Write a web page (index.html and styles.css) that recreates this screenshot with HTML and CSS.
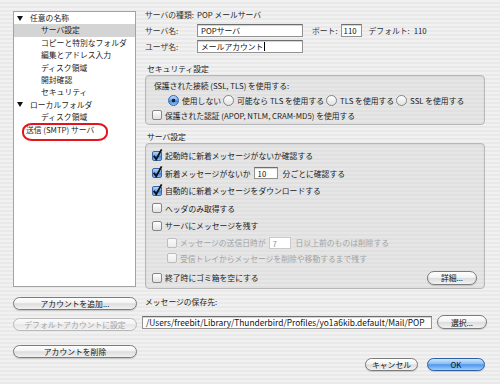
FILE: index.html
```html
<!DOCTYPE html>
<html lang="ja">
<head>
<meta charset="UTF-8">
<meta name="viewport" content="width=device-width, initial-scale=1.0">
<title>アカウント設定</title>
<link rel="stylesheet" href="styles.css">
</head>
<body>
<svg class="defs" width="0" height="0">
  <defs>
    <linearGradient id="aqua" x1="0" y1="0" x2="0" y2="1">
      <stop offset="0" stop-color="#c4def9"/>
      <stop offset="0.45" stop-color="#6ea8ee"/>
      <stop offset="0.55" stop-color="#3f86e4"/>
      <stop offset="1" stop-color="#8fc4f8"/>
    </linearGradient>
  </defs>
</svg>

<div class="window">
  <div class="sidebar">
    <ul class="tree">
      <li class="node parent"><span class="twisty"></span>任意の名称</li>
      <li class="node child selected">サーバ設定</li>
      <li class="node child">コピーと特別なフォルダ</li>
      <li class="node child">編集とアドレス入力</li>
      <li class="node child">ディスク領域</li>
      <li class="node child">開封確認</li>
      <li class="node child">セキュリティ</li>
      <li class="node parent"><span class="twisty"></span>ローカルフォルダ</li>
      <li class="node child">ディスク領域</li>
      <li class="node top">送信 (SMTP) サーバ</li>
      <li class="mark"></li>
    </ul>
    <button class="btn side-btn first">アカウントを追加...</button>
    <button class="btn side-btn second" disabled>デフォルトアカウントに設定</button>
    <button class="btn side-btn third">アカウントを削除</button>
  </div>

  <div class="content">
    <div class="info">
      <span class="lbl">サーバの種類:</span>
      <span class="val">POP メールサーバ</span>
      <span class="lbl">サーバ名:</span>
      <div class="line">
        <span class="field host">POPサーバ</span>
        <span class="lbl port-lbl">ポート:</span>
        <span class="field port">110</span>
        <span class="lbl def-lbl">デフォルト:</span>
        <span class="val def-val">110</span>
      </div>
      <span class="lbl">ユーザ名:</span>
      <div class="line">
        <span class="field host">メールアカウント<span class="caret"></span></span>
      </div>
    </div>

    <div class="section-title">セキュリティ設定</div>
    <div class="group security">
      <div class="row text-row">保護された接続 (SSL, TLS) を使用する:</div>
      <div class="row radios">
        <span class="radio on"></span><span class="opt">使用しない</span>
        <span class="radio"></span><span class="opt">可能なら TLS を使用する</span>
        <span class="radio"></span><span class="opt">TLS を使用する</span>
        <span class="radio"></span><span class="opt">SSL を使用する</span>
      </div>
      <div class="row check-row">
        <span class="cb"></span>保護された認証 (APOP, NTLM, CRAM-MD5) を使用する
      </div>
    </div>

    <div class="section-title server-title">サーバ設定</div>
    <div class="group server">
      <div class="row srow">
        <svg class="cb-on" viewBox="0 0 10 10" width="10" height="10"><rect x="0.5" y="0.5" width="9" height="9" rx="1.5" fill="url(#aqua)" stroke="#3a66a3"/><path d="M1.8 4.8 L4.2 8.2 L9.6 -1.6" fill="none" stroke="#111" stroke-width="1.8"/></svg>
        起動時に新着メッセージがないか確認する
      </div>
      <div class="row srow">
        <svg class="cb-on" viewBox="0 0 10 10" width="10" height="10"><rect x="0.5" y="0.5" width="9" height="9" rx="1.5" fill="url(#aqua)" stroke="#3a66a3"/><path d="M1.8 4.8 L4.2 8.2 L9.6 -1.6" fill="none" stroke="#111" stroke-width="1.8"/></svg>
        新着メッセージがないか<span class="field num">10</span><span class="after">分ごとに確認する</span>
      </div>
      <div class="row srow">
        <svg class="cb-on" viewBox="0 0 10 10" width="10" height="10"><rect x="0.5" y="0.5" width="9" height="9" rx="1.5" fill="url(#aqua)" stroke="#3a66a3"/><path d="M1.8 4.8 L4.2 8.2 L9.6 -1.6" fill="none" stroke="#111" stroke-width="1.8"/></svg>
        自動的に新着メッセージをダウンロードする
      </div>
      <div class="row srow"><span class="cb"></span>ヘッダのみ取得する</div>
      <div class="row srow"><span class="cb"></span>サーバにメッセージを残す</div>
      <div class="row srow sub disabled short">
        <span class="cb"></span>メッセージの送信日時が<span class="field num small">7</span><span class="after">日以上前のものは削除する</span>
      </div>
      <div class="row srow sub disabled short2">
        <span class="cb"></span>受信トレイからメッセージを削除や移動するまで残す
      </div>
      <div class="row srow last">
        <span class="grow"><span class="cb"></span>終了時にゴミ箱を空にする</span>
        <button class="btn detail">詳細...</button>
      </div>
    </div>

    <div class="store-lbl">メッセージの保存先:</div>
    <div class="store">
      <span class="field path">/Users/freebit/Library/Thunderbird/Profiles/yo1a6kib.default/Mail/POP</span>
      <button class="btn choose">選択...</button>
    </div>

    <div class="footer">
      <button class="btn cancel">キャンセル</button>
      <button class="btn ok">OK</button>
    </div>
  </div>
</div>
</body>
</html>
```

FILE: styles.css
```css
* {
    box-sizing: border-box;
}

html, body {
    margin: 0;
}

body {
    width: 500px;
    height: 384px;
    overflow: hidden;
    font-family: "Noto Sans CJK JP", sans-serif;
    font-size: 7.8px;
    color: #1c1c1c;
    background: repeating-linear-gradient(#f1f1f1 0 2px, #e9e9e9 2px 4px);
}

.defs {
    position: absolute;
}

.window {
    display: flex;
    padding-left: 13px;
}

/* left column */
.sidebar {
    width: 124px;
    padding-top: 11px;
    display: flex;
    flex-direction: column;
}

.tree {
    list-style: none;
    margin: 0;
    padding: 0;
    width: 123px;
    height: 276px;
    background: #fff;
    border: 1px solid #a3a3a3;
    position: relative;
}

.node {
    height: 12.4px;
    line-height: 12.4px;
    white-space: nowrap;
}

.parent {
    display: flex;
    align-items: center;
    padding-left: 3px;
}

.twisty {
    width: 0;
    height: 0;
    border-left: 3px solid transparent;
    border-right: 3px solid transparent;
    border-top: 5px solid #111;
    margin-right: 7px;
}

.child {
    padding-left: 27px;
}

.top {
    padding-left: 12px;
}

.selected {
    background: #d4d4d4;
}

.mark {
    position: absolute;
    left: 8px;
    top: 111px;
    width: 86px;
    height: 18px;
    border: 2px solid #e3141c;
    border-radius: 10px / 8px;
}

.btn {
    font-family: inherit;
    font-size: 7.8px;
    color: #111;
    height: 13px;
    padding: 0;
    line-height: 11px;
    border: 1px solid #7b7b7b;
    border-radius: 7px;
    background: linear-gradient(#ffffff 0%, #f3f3f3 45%, #dddddd 52%, #f2f2f2 100%);
    box-shadow: 0 1px 1px rgba(0, 0, 0, 0.15);
}

.btn:disabled {
    color: #a4a4a4;
    border-color: #b9b9b9;
    background: linear-gradient(#fbfbfb 0%, #f2f2f2 45%, #e6e6e6 52%, #f3f3f3 100%);
    box-shadow: none;
}

.side-btn {
    width: 124px;
}

.first {
    margin-top: 10px;
}

.second {
    margin-top: 8px;
}

.third {
    margin-top: 14px;
}

/* right column */
.content {
    margin-left: 8px;
    width: 342px;
    padding-top: 9px;
}

.info {
    display: grid;
    grid-template-columns: 52px 1fr;
    grid-template-rows: 12px 13px 13px;
    row-gap: 3px;
    align-items: center;
}

.lbl, .val {
    line-height: 12px;
    white-space: nowrap;
}

.lbl {
    color: #333;
}

.line {
    display: flex;
    align-items: center;
    height: 13px;
}

.field {
    display: inline-block;
    background: #fff;
    border: 1px solid #939393;
    border-top-color: #6d6d6d;
    box-shadow: inset 0 1px 1px rgba(0, 0, 0, 0.18);
    height: 13px;
    line-height: 11px;
    padding-left: 3px;
    white-space: nowrap;
    color: #111;
}

.host {
    width: 106px;
}

.caret {
    display: inline-block;
    width: 1px;
    height: 9px;
    background: #000;
    vertical-align: -1px;
    margin-left: 1px;
}

.port-lbl {
    margin-left: 9px;
    margin-right: 3px;
}

.port {
    width: 21px;
    padding-left: 2px;
}

.def-lbl {
    margin-left: 7px;
    margin-right: 4px;
}

.section-title {
    height: 12px;
    line-height: 12px;
    margin-top: 10px;
    padding-left: 2px;
    color: #222;
}

.server-title {
    margin-top: 6px;
}

.group {
    width: 340px;
    border: 1px solid #b7b7b7;
    border-radius: 4px;
    background: repeating-linear-gradient(#e6e6e6 0 2px, #e0e0e0 2px 4px);
    box-shadow: inset 0 1px 2px rgba(0, 0, 0, 0.08);
}

.row {
    display: flex;
    align-items: center;
    white-space: nowrap;
}

.security {
    padding: 3px 0;
    display: flex;
    flex-direction: column;
    gap: 3px;
}

.security .row {
    height: 12px;
}

.text-row {
    padding-left: 8px;
}

.radios {
    padding-left: 22px;
}

.radio {
    width: 11px;
    height: 11px;
    border-radius: 50%;
    border: 1px solid #858585;
    background: linear-gradient(#ffffff, #e2e2e2);
    margin-right: 3px;
    flex-shrink: 0;
}

.radio.on {
    border-color: #3a66a3;
    background: radial-gradient(circle, #18243a 0 1.6px, transparent 2.1px), linear-gradient(#c4def9 0%, #6ea8ee 45%, #3f86e4 55%, #8fc4f8 100%);
}

.opt {
    margin-right: 2px;
}

.check-row {
    padding-left: 6px;
}

.cb {
    width: 10px;
    height: 10px;
    border: 1px solid #868686;
    border-radius: 2px;
    background: linear-gradient(#ffffff, #e0e0e0);
    margin-right: 3px;
    flex-shrink: 0;
}

.cb-on {
    overflow: visible;
    margin-right: 3px;
    flex-shrink: 0;
}

.server {
    padding-top: 3px;
    height: 146px;
}

.srow {
    height: 17.5px;
    padding-left: 6px;
}

.srow.short {
    height: 16px;
}

.srow.short2 {
    height: 15px;
}

.sub {
    padding-left: 21px;
}

.disabled {
    color: #a2a2a2;
}

.disabled .cb {
    border-color: #bdbdbd;
    background: linear-gradient(#fafafa, #ececec);
}

.disabled .field {
    color: #999;
    border-color: #c9c9c9;
    box-shadow: none;
}

.num {
    width: 24px;
    height: 12px;
    margin-left: 3px;
}

.num.small {
    width: 22px;
}

.after {
    margin-left: 5px;
}

.last {
    height: 24px;
    padding-right: 7px;
}

.grow {
    flex: 1;
    display: flex;
    align-items: center;
}

.detail {
    width: 50px;
    height: 14px;
}

.store-lbl {
    margin-top: 7px;
    height: 12px;
    line-height: 12px;
}

.store {
    display: flex;
    align-items: center;
    margin-top: 7px;
    margin-left: -3px;
}

.path {
    width: 290px;
    font-size: 8.4px;
}

.choose {
    width: 50px;
    height: 14px;
    margin-left: 5px;
}

.footer {
    display: flex;
    justify-content: flex-end;
    margin-top: 29px;
    padding-right: 2px;
}

.cancel {
    width: 53px;
}

.ok {
    width: 58px;
    margin-left: 9px;
    border-color: #2f5f9f;
    background: linear-gradient(#d0e6fc 0%, #84bdf6 45%, #4f96ee 52%, #9ccffc 100%);
}
```
